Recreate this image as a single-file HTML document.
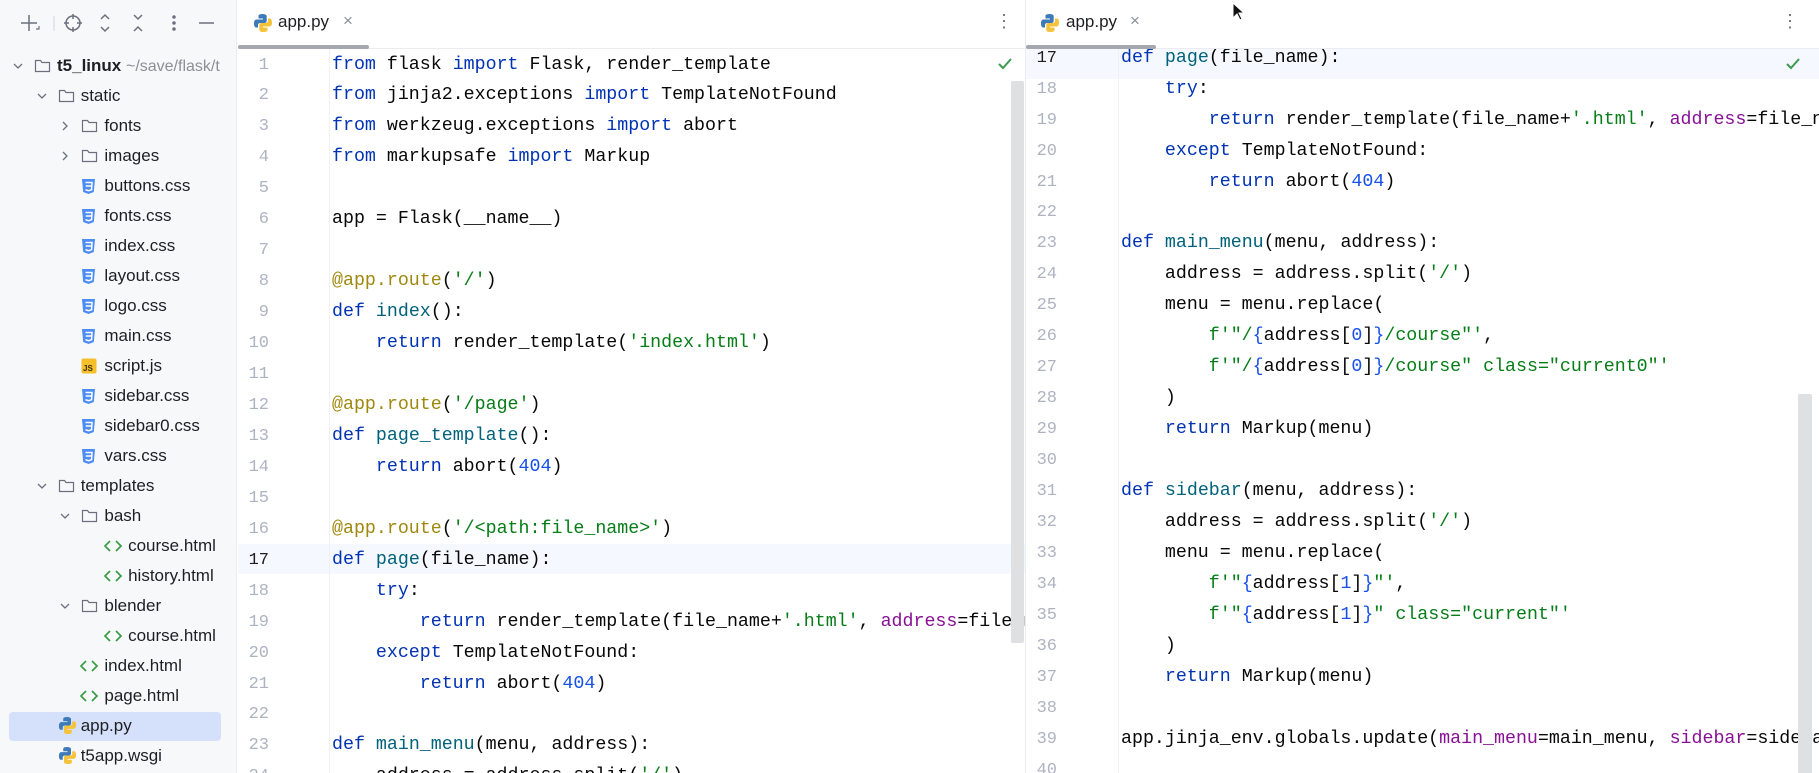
<!DOCTYPE html>
<html><head><meta charset="utf-8"><style>
*{margin:0;padding:0;box-sizing:border-box}
body{width:1819px;height:773px;overflow:hidden;background:#fff;font-family:"Liberation Sans",sans-serif;position:relative}
#side{position:absolute;left:0;top:0;width:237px;height:773px;background:#f7f8fa;border-right:1px solid #ebecf0}
.row{position:absolute;height:30px;line-height:30px;font-size:17px;color:#1e1f22;white-space:nowrap}
.row svg{position:absolute;top:7px}
.row span{position:absolute;top:0}
.sel{position:absolute;left:9px;top:712px;width:212px;height:29px;background:#d5e1fb;border-radius:4px}
.ed{position:absolute;top:49px;height:724px;overflow:hidden;background:#fff}
.ln{position:absolute;height:31px;line-height:31px;font-family:"Liberation Mono",monospace;font-size:18.3px;white-space:pre;color:#080808}
.num{position:absolute;height:31px;line-height:31px;font-family:"Liberation Mono",monospace;font-size:17px;color:#aeb3c2;text-align:right;width:40px}
.k{color:#0033b3}.s{color:#067d17}.n{color:#1750eb}.d{color:#9e880d}.f{color:#00627a}.p{color:#871094}
.tabbar{position:absolute;top:0;height:49px;border-bottom:1px solid #ebecf0;background:#fff}
</style></head><body>
<div id="side">
  <svg style="position:absolute;left:18px;top:12px" width="200" height="22" viewBox="0 0 200 22" fill="none" stroke="#6c707e" stroke-width="1.5">
    <path d="M11 3v16M3 11h16"/><path d="M18 17l3 0l0 -3" stroke-width="1.2"/>
    <line x1="36" y1="4" x2="36" y2="19" stroke="#dfe1e5"/>
    <circle cx="55" cy="11" r="7"/><path d="M55 2v5M55 15v5M46 11h5M59 11h5"/>
    <path d="M83 7l4-4 4 4M83 15l4 4 4-4"/>
    <path d="M116 3l4 4 4-4M116 19l4-4 4 4"/>
    <circle cx="156" cy="5" r="1" fill="#6c707e"/><circle cx="156" cy="11" r="1" fill="#6c707e"/><circle cx="156" cy="17" r="1" fill="#6c707e"/>
    <path d="M181 11h15"/>
  </svg>
  <div class="sel"></div>
  <div id="tree"></div>
</div>

<div class="tabbar" style="left:238px;width:787px">
  <svg style="position:absolute;left:15px;top:13px" width="20" height="20" viewBox="0 0 20 20"><path d="M9.5 1C5 1 5.5 3 5.5 3v2.5H10v1H3.5S1 6.2 1 10.5 3.2 14.5 3.2 14.5H5v-2.3S4.9 10 7.2 10h4.3s2.2 0 2.2-2.1V3.3S14 1 9.5 1z" fill="#3d7ab8"/><path d="M10.5 19c4.5 0 4-2 4-2v-2.5H10v-1h6.5s2.5.3 2.5-4-2.2-4-2.2-4H15v2.3s.1 2.2-2.2 2.2H8.5s-2.2 0-2.2 2.1v4.6S6 19 10.5 19z" fill="#f5c33b"/></svg>
  <span style="position:absolute;left:40px;top:12px;font-size:17px;color:#1e1f22">app.py</span>
  <span style="position:absolute;left:105px;top:11px;font-size:17px;color:#8c8f96">×</span>
  <div style="position:absolute;left:0;top:45px;width:131px;height:4px;background:#a5a8ae;border-radius:2px"></div>
  <span style="position:absolute;left:757px;top:11px;font-size:18px;color:#6c707e">⋮</span>
</div>
<div class="ed" id="L" style="left:238px;width:787px"></div>

<div style="position:absolute;left:1025px;top:0;width:1px;height:773px;background:#ebecf0"></div>
<div class="tabbar" style="left:1026px;width:793px">
  <svg style="position:absolute;left:14px;top:13px" width="20" height="20" viewBox="0 0 20 20"><path d="M9.5 1C5 1 5.5 3 5.5 3v2.5H10v1H3.5S1 6.2 1 10.5 3.2 14.5 3.2 14.5H5v-2.3S4.9 10 7.2 10h4.3s2.2 0 2.2-2.1V3.3S14 1 9.5 1z" fill="#3d7ab8"/><path d="M10.5 19c4.5 0 4-2 4-2v-2.5H10v-1h6.5s2.5.3 2.5-4-2.2-4-2.2-4H15v2.3s.1 2.2-2.2 2.2H8.5s-2.2 0-2.2 2.1v4.6S6 19 10.5 19z" fill="#f5c33b"/></svg>
  <span style="position:absolute;left:40px;top:12px;font-size:17px;color:#1e1f22">app.py</span>
  <span style="position:absolute;left:104px;top:11px;font-size:17px;color:#8c8f96">×</span>
  <div style="position:absolute;left:0;top:45px;width:130px;height:4px;background:#a5a8ae;border-radius:2px"></div>
  <span style="position:absolute;left:755px;top:11px;font-size:18px;color:#6c707e">⋮</span>
</div>
<div class="ed" id="R" style="left:1026px;width:793px"></div>

<svg style="position:absolute;left:1232px;top:2px" width="14" height="20" viewBox="0 0 14 20"><path d="M1 1v15l4-4 3 6 2-1-3-6h5z" fill="#111" stroke="#fff" stroke-width="1"/></svg>

<script>
const folder='<svg width="17" height="16" viewBox="0 0 17 16" fill="none" stroke="#6c707e" stroke-width="1.2"><path d="M1.5 2.5h5l1.5 2h7.5v9h-14z"/></svg>';
const chevD='<svg width="12" height="12" viewBox="0 0 12 12" style="top:9px" fill="none" stroke="#6c707e" stroke-width="1.3"><path d="M2 4l4 4 4-4"/></svg>';
const chevR='<svg width="12" height="12" viewBox="0 0 12 12" style="top:9px" fill="none" stroke="#6c707e" stroke-width="1.3"><path d="M4 2l4 4-4 4"/></svg>';
const css='<svg width="15" height="17" viewBox="0 0 15 17"><path d="M1 1h13l-1.2 13L7.5 16 2.2 14z" fill="#4c8cf5"/><path d="M4.5 4.5h6.5l-.4 7.2-3.1 1-3-1M4.7 8h5.8" fill="none" stroke="#fff" stroke-width="1.5"/></svg>';
const js='<svg width="16" height="16" viewBox="0 0 16 16"><rect x="0.5" y="0.5" width="15" height="15" rx="2" fill="#f4bf2a"/><text x="2" y="13" font-family="Liberation Sans" font-weight="bold" font-size="8" fill="#3b2f00">JS</text></svg>';
const html='<svg width="20" height="14" viewBox="0 0 20 14" fill="none" stroke="#3a9b45" stroke-width="1.7"><path d="M7 2L2 7l5 5M13 2l5 5-5 5"/></svg>';
const py='<svg width="19" height="19" viewBox="0 0 20 20"><path d="M9.5 1C5 1 5.5 3 5.5 3v2.5H10v1H3.5S1 6.2 1 10.5 3.2 14.5 3.2 14.5H5v-2.3S4.9 10 7.2 10h4.3s2.2 0 2.2-2.1V3.3S14 1 9.5 1z" fill="#3d7ab8"/><path d="M10.5 19c4.5 0 4-2 4-2v-2.5H10v-1h6.5s2.5.3 2.5-4-2.2-4-2.2-4H15v2.3s.1 2.2-2.2 2.2H8.5s-2.2 0-2.2 2.1v4.6S6 19 10.5 19z" fill="#f5c33b"/></svg>';
const items=[[0,'f','t5_linux','d'],[1,'f','static','d'],[2,'f','fonts','r'],[2,'f','images','r'],
[2,'c','buttons.css'],[2,'c','fonts.css'],[2,'c','index.css'],[2,'c','layout.css'],[2,'c','logo.css'],[2,'c','main.css'],[2,'j','script.js'],[2,'c','sidebar.css'],[2,'c','sidebar0.css'],[2,'c','vars.css'],
[1,'f','templates','d'],[2,'f','bash','d'],[3,'h','course.html'],[3,'h','history.html'],[2,'f','blender','d'],[3,'h','course.html'],[2,'h','index.html'],[2,'h','page.html'],[1,'p','app.py'],[1,'p','t5app.wsgi']];
let t='';
items.forEach((it,i)=>{
 const [lv,ty,nm,ch]=it; const top=51+i*30; const ix=34+lv*23.7;
 let s='<div class="row" style="left:0;top:'+top+'px;width:237px">';
 if(ch) s+='<span style="left:'+(ix-22)+'px">'+(ch=='d'?chevD:chevR)+'</span>';
 let icon=ty=='f'?folder:ty=='c'?css:ty=='j'?js:ty=='h'?html:py;
 let st=ty=='f'?'top:7px':ty=='h'?'top:8px':ty=='p'?'top:5px':'top:7px';
 s+='<span style="left:'+(ty=='h'?ix-2:ix)+'px">'+icon.replace('<svg ','<svg style="position:absolute;'+st+'" ')+'</span>';
 let tx=ix+23;
 if(lv==0){s+='<span style="left:'+tx+'px;font-weight:bold">t5_linux <span style="position:static;font-weight:normal;color:#8c8f96;font-size:16px">~/save/flask/t</span></span>';}
 else s+='<span style="left:'+tx+'px">'+nm+'</span>';
 s+='</div>';t+=s;
});
document.getElementById('tree').innerHTML=t;

const k=s=>'<span class="k">'+s+'</span>',st=s=>'<span class="s">'+s+'</span>',n=s=>'<span class="n">'+s+'</span>',d=s=>'<span class="d">'+s+'</span>',f=s=>'<span class="f">'+s+'</span>',p=s=>'<span class="p">'+s+'</span>';
const code={
1:k('from')+' flask '+k('import')+' Flask, render_template',
2:k('from')+' jinja2.exceptions '+k('import')+' TemplateNotFound',
3:k('from')+' werkzeug.exceptions '+k('import')+' abort',
4:k('from')+' markupsafe '+k('import')+' Markup',
5:'',
6:'app = Flask(__name__)',
7:'',
8:d('@app.route')+'('+st("'/'")+')',
9:k('def')+' '+f('index')+'():',
10:'    '+k('return')+' render_template('+st("'index.html'")+')',
11:'',
12:d('@app.route')+'('+st("'/page'")+')',
13:k('def')+' '+f('page_template')+'():',
14:'    '+k('return')+' abort('+n('404')+')',
15:'',
16:d('@app.route')+'('+st("'/&lt;path:file_name&gt;'")+')',
17:k('def')+' '+f('page')+'(file_name):',
18:'    '+k('try')+':',
19:'        '+k('return')+' render_template(file_name+'+st("'.html'")+', '+p('address')+'=file_name)',
20:'    '+k('except')+' TemplateNotFound:',
21:'        '+k('return')+' abort('+n('404')+')',
22:'',
23:k('def')+' '+f('main_menu')+'(menu, address):',
24:'    address = address.split('+st("'/'")+')',
25:'    menu = menu.replace(',
26:'        '+st('f\'"/')+n('{')+'address['+n('0')+']'+n('}')+st('/course"\'')+',',
27:'        '+st('f\'"/')+n('{')+'address['+n('0')+']'+n('}')+st('/course" class="current0"\''),
28:'    )',
29:'    '+k('return')+' Markup(menu)',
30:'',
31:k('def')+' '+f('sidebar')+'(menu, address):',
32:'    address = address.split('+st("'/'")+')',
33:'    menu = menu.replace(',
34:'        '+st('f\'"')+n('{')+'address['+n('1')+']'+n('}')+st('"\'')+',',
35:'        '+st('f\'"')+n('{')+'address['+n('1')+']'+n('}')+st('" class="current"\''),
36:'    )',
37:'    '+k('return')+' Markup(menu)',
38:'',
39:'app.jinja_env.globals.update('+p('main_menu')+'=main_menu, '+p('sidebar')+'=sidebar)',
40:''
};
function build(id,from,to,top0,numRight,codeX,sepX,curTop,w){
 let h='';
 h+='<div style="position:absolute;left:0;top:'+curTop+'px;width:'+w+'px;height:30px;background:#f5f8fe"></div>';
 h+='<div style="position:absolute;left:'+sepX+'px;top:0;width:1px;height:724px;background:#f0f1f3"></div>';
 for(let i=from;i<=to;i++){
  const t=top0+(i-from)*30.95;
  h+='<div class="num" style="left:'+(numRight-40)+'px;top:'+t+'px;'+(i==17?'color:#1e1f22':'')+'">'+i+'</div>';
  h+='<div class="ln" style="left:'+codeX+'px;top:'+t+'px">'+code[i]+'</div>';
 }
 document.getElementById(id).innerHTML=h;
}
build('L',1,24,0.5,31,94,91,495,787);
build('R',17,40,-6.3,31,95,92,0,793);
document.getElementById('L').innerHTML+='<svg style="position:absolute;left:760px;top:9px" width="14" height="12" viewBox="0 0 14 12" fill="none" stroke="#3d9a50" stroke-width="2"><path d="M1 6l4 4 8-9"/></svg><div style="position:absolute;left:773px;top:32px;width:13px;height:562px;background:#dfe0e2;border-radius:2px"></div>';
document.getElementById('R').innerHTML+='<svg style="position:absolute;left:760px;top:9px" width="14" height="12" viewBox="0 0 14 12" fill="none" stroke="#3d9a50" stroke-width="2"><path d="M1 6l4 4 8-9"/></svg><div style="position:absolute;left:772px;top:345px;width:14px;height:400px;background:#dfe0e2;border-radius:2px"></div>';
</script>
</body></html>
